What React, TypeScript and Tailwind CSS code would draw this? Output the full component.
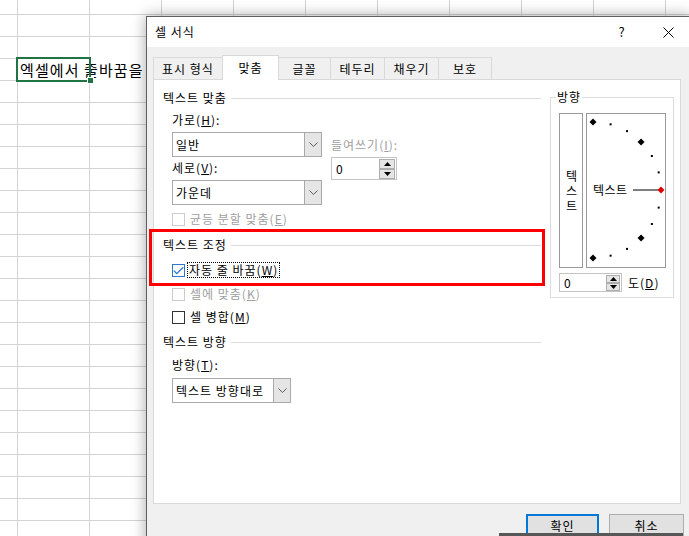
import React from "react";

const U = ({ c }: { c: string }) => <span className="underline">{c}</span>;

function Chevron() {
  return (
    <svg width="9" height="5" viewBox="0 0 9 5">
      <path d="M0.5 0.5 L4.5 4.5 L8.5 0.5" fill="none" stroke="#5a5a5a" strokeWidth="1" />
    </svg>
  );
}

function SpinBtn({ up, h }: { up: boolean; h: string }) {
  return (
    <div className={`flex items-center justify-center border border-[#adadad] bg-[#e5e5e5] ${h}`}>
      <svg width="7" height="4" viewBox="0 0 7 4">
        {up ? <path d="M0 4 L3.5 0 L7 4 Z" fill="#000" /> : <path d="M0 0 L3.5 4 L7 0 Z" fill="#000" />}
      </svg>
    </div>
  );
}

function Check({ state }: { state: "on" | "off" | "dis" }) {
  const b =
    state === "on" ? "border-[#2b78d0]" : state === "off" ? "border-[#333333]" : "border-[#cccccc]";
  return (
    <div className={`w-[13px] h-[13px] shrink-0 border bg-white flex items-center justify-center ${b}`}>
      {state === "on" && (
        <svg width="11" height="9" viewBox="0 0 11 9">
          <path d="M0.8 4.6 L3.8 7.6 L10.2 1.2" fill="none" stroke="#2b78d0" strokeWidth="1.3" />
        </svg>
      )}
    </div>
  );
}

function GroupHeader({ label, mt }: { label: string; mt: string }) {
  return (
    <div className={`flex items-center h-[16px] pl-[9px] pr-[9px] ${mt}`}>
      <span className="leading-[16px]">{label}</span>
      <div className="flex-1 h-px bg-[#dcdcdc] ml-[4px]" />
    </div>
  );
}

function Dial() {
  const cx = 6;
  const cy = 76;
  const r = 68;
  const pts = [];
  for (let i = 0; i < 13; i++) {
    const a = ((90 - i * 15) * Math.PI) / 180;
    pts.push({ x: cx + r * Math.cos(a), y: cy - r * Math.sin(a), i });
  }
  return (
    <svg className="absolute inset-0" width="78" height="153" viewBox="0 0 78 153">
      <line x1="46" y1={cy} x2="71" y2={cy} stroke="#000" strokeWidth="1" />
      {pts.map((p) => {
        const big = p.i % 3 === 0;
        if (big) {
          const s = 3.5;
          return (
            <polygon
              key={p.i}
              points={`${p.x},${p.y - s} ${p.x + s},${p.y} ${p.x},${p.y + s} ${p.x - s},${p.y}`}
              fill={p.i === 6 ? "#e00000" : "#000"}
            />
          );
        }
        return <rect key={p.i} x={p.x - 1} y={p.y - 1} width="2" height="2" fill="#000" />;
      })}
    </svg>
  );
}

export default function App() {
  const rows = Array.from({ length: 26 });
  const cols = Array.from({ length: 10 });
  return (
    <div className="relative w-[689px] h-[536px] overflow-hidden bg-white text-black font-['Noto_Sans_CJK_KR',sans-serif]">
      {/* spreadsheet grid */}
      <div className="flex flex-col -mt-[7px]">
        {rows.map((_, r) => (
          <div key={r} className="flex h-[22px] border-b border-[#d4d4d4] shrink-0">
            <div className="w-[18px] shrink-0 border-r border-[#d4d4d4]" />
            {cols.map((_, c) => (
              <div key={c} className="w-[72px] shrink-0 border-r border-[#d4d4d4]" />
            ))}
          </div>
        ))}
      </div>

      {/* cell text */}
      <div className="absolute left-[20px] top-[58px] h-[23px] flex items-center bg-white pr-[10px] text-[15px] tracking-[1.1px] leading-[23px] whitespace-nowrap">
        엑셀에서 줄바꿈을
      </div>
      {/* selected cell */}
      <div className="absolute left-[16px] top-[57px] w-[75px] h-[25px] border-2 border-[#217346]" />
      <div className="absolute left-[87px] top-[77px] w-[7px] h-[7px] bg-[#217346] border border-white" />

      {/* dialog */}
      <div className="absolute left-[146px] top-[16px] w-[546px] h-[540px] border border-[#5f5f5f] bg-[#f0f0f0] shadow-[0_0_14px_rgba(0,0,0,0.35)] text-[12px] tracking-[1px]">
        <div className="flex items-center h-[30px] bg-white">
          <span className="pl-[8px] leading-[16px]">셀 서식</span>
          <div className="flex-1" />
          <div className="w-[46px] flex items-center justify-center text-[13px]">?</div>
          <div className="w-[46px] flex items-center justify-center">
            <svg width="11" height="11" viewBox="0 0 11 11">
              <path d="M0.5 0.5 L10.5 10.5 M10.5 0.5 L0.5 10.5" stroke="#000" strokeWidth="1" />
            </svg>
          </div>
        </div>

        <div className="pt-[8px] pl-[6px]">
          {/* tabs */}
          <div className="relative z-10 flex items-end h-[25px] -mb-px">
            <div className="w-[69px] h-[22px] mb-px flex items-center justify-center border-l border-t border-[#d9d9d9]">표시 형식</div>
            <div className="w-[57px] h-[25px] flex items-center justify-center border-l border-t border-r border-[#d9d9d9] bg-white">맞춤</div>
            <div className="w-[51px] h-[22px] mb-px flex items-center justify-center border-t border-[#d9d9d9]">글꼴</div>
            <div className="w-[54px] h-[22px] mb-px flex items-center justify-center border-l border-t border-[#d9d9d9]">테두리</div>
            <div className="w-[54px] h-[22px] mb-px flex items-center justify-center border-l border-t border-[#d9d9d9]">채우기</div>
            <div className="w-[54px] h-[22px] mb-px flex items-center justify-center border-l border-t border-r border-[#d9d9d9]">보호</div>
          </div>

          {/* panel */}
          <div className="w-[528px] h-[425px] border border-[#d9d9d9] bg-white flex">
            {/* left column */}
            <div className="w-[396px] flex flex-col">
              <GroupHeader label="텍스트 맞춤" mt="mt-[10px]" />
              <div className="flex pl-[18px] mt-[6px]">
                <div className="w-[150px] flex flex-col">
                  <div className="h-[16px] leading-[16px]">가로(<U c="H" />):</div>
                  <div className="mt-[4px] flex h-[25px] border border-[#a9a9a9] bg-white">
                    <div className="flex-1 flex items-center pl-[3px]">일반</div>
                    <div className="w-[17px] border-l border-[#a9a9a9] bg-[#e5e5e5] flex items-center justify-center">
                      <Chevron />
                    </div>
                  </div>
                  <div className="mt-[3px] h-[16px] leading-[16px]">세로(<U c="V" />):</div>
                  <div className="mt-[4px] flex h-[25px] border border-[#a9a9a9] bg-white">
                    <div className="flex-1 flex items-center pl-[3px]">가운데</div>
                    <div className="w-[17px] border-l border-[#a9a9a9] bg-[#e5e5e5] flex items-center justify-center">
                      <Chevron />
                    </div>
                  </div>
                </div>
                <div className="ml-[9px] pt-[25px] flex flex-col">
                  <div className="h-[16px] leading-[16px] text-[#a0a0a0] whitespace-nowrap">들여쓰기(<U c="I" />):</div>
                  <div className="mt-[4px] flex w-[66px] h-[23px] border border-[#c4c4c4] bg-white">
                    <div className="flex-1 flex items-center pl-[4px]">0</div>
                    <div className="flex flex-col w-[17px] pt-px pr-px">
                      <SpinBtn up h="h-[10px]" />
                      <SpinBtn up={false} h="h-[10px]" />
                    </div>
                  </div>
                </div>
              </div>
              <div className="flex items-center h-[16px] pl-[18px] mt-[6px] text-[#a0a0a0]">
                <Check state="dis" />
                <span className="ml-[5px] leading-[16px]">균등 분할 맞춤(<U c="E" />)</span>
              </div>

              <GroupHeader label="텍스트 조정" mt="mt-[10px]" />
              <div className="flex items-center h-[16px] pl-[18px] mt-[9px]">
                <Check state="on" />
                <span className="ml-[2px] px-[1px] border border-dotted border-black leading-[14px]">
                  자동 줄 바꿈(<U c="W" />)
                </span>
              </div>
              <div className="flex items-center h-[16px] pl-[18px] mt-[8px] text-[#a0a0a0]">
                <Check state="dis" />
                <span className="ml-[5px] leading-[16px]">셀에 맞춤(<U c="K" />)</span>
              </div>
              <div className="flex items-center h-[16px] pl-[18px] mt-[7px]">
                <Check state="off" />
                <span className="ml-[5px] leading-[16px]">셀 병합(<U c="M" />)</span>
              </div>

              <GroupHeader label="텍스트 방향" mt="mt-[9px]" />
              <div className="h-[16px] leading-[16px] pl-[18px] mt-[7px]">방향(<U c="T" />):</div>
              <div className="ml-[18px] mt-[5px] flex w-[119px] h-[25px] border border-[#a9a9a9] bg-white">
                <div className="flex-1 flex items-center pl-[3px] whitespace-nowrap">텍스트 방향대로</div>
                <div className="w-[17px] border-l border-[#a9a9a9] bg-[#e5e5e5] flex items-center justify-center">
                  <Chevron />
                </div>
              </div>
            </div>

            {/* orientation fieldset */}
            <div className="relative mt-[17px] w-[124px] h-[201px] border border-[#dcdcdc]">
              <div className="absolute -top-[9px] left-[5px] bg-white px-[1px] h-[16px] leading-[16px]">방향</div>
              <div className="flex ml-[8px] mt-[15px] gap-[3px]">
                <div className="w-[24px] h-[155px] border border-[#999999] flex items-center justify-center">
                  <div className="[writing-mode:vertical-rl] [text-orientation:upright] tracking-[3px] leading-[16px] pt-[3px]">텍스트</div>
                </div>
                <div className="relative w-[80px] h-[155px] border border-[#999999]">
                  <Dial />
                  <div className="absolute left-[6px] top-[68px] h-[16px] leading-[16px] tracking-[0.5px]">텍스트</div>
                </div>
              </div>
              <div className="flex items-center ml-[8px] mt-[5px]">
                <div className="flex w-[63px] h-[19px] border border-[#c4c4c4] bg-white">
                  <div className="flex-1 flex items-center pl-[4px]">0</div>
                  <div className="flex flex-col w-[15px] pt-px pr-px">
                    <SpinBtn up h="h-[8px]" />
                    <SpinBtn up={false} h="h-[8px]" />
                  </div>
                </div>
                <span className="ml-[6px] leading-[16px]">도(<U c="D" />)</span>
              </div>
            </div>
          </div>

          {/* buttons */}
          <div className="flex mt-[10px] ml-[373px] gap-[10px]">
            <div className="w-[73px] h-[23px] border-2 border-[#0078d7] bg-[#e1e1e1] flex items-center justify-center">확인</div>
            <div className="w-[75px] h-[23px] border border-[#adadad] bg-[#e1e1e1] flex items-center justify-center">취소</div>
          </div>
        </div>
      </div>

      {/* annotation box */}
      <div className="absolute left-[149px] top-[229px] w-[396px] h-[57px] border-[3px] border-[#ff0000]" />

      {/* bottom dark strip */}
      <div className="absolute left-[499px] top-[533px] w-[184px] h-[3px] bg-[#575757]" />
    </div>
  );
}
